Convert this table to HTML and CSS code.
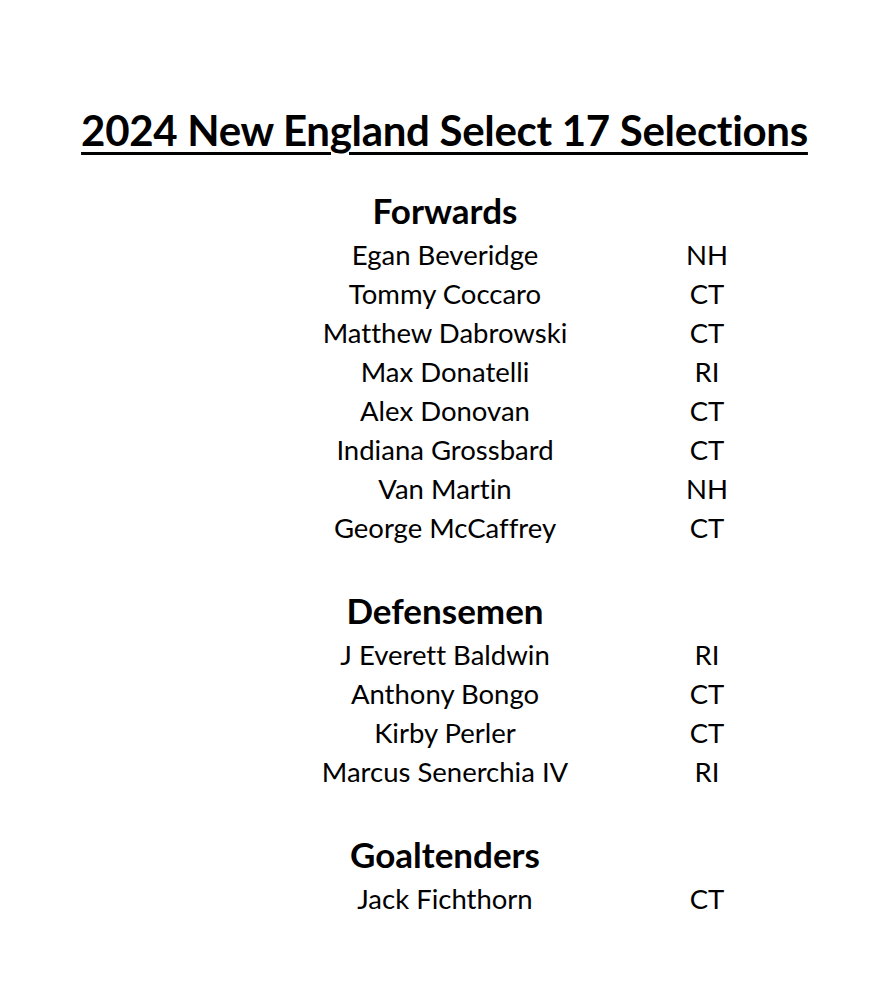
FILE: index.html
```html
<!DOCTYPE html>
<html>
<head>
<meta charset="utf-8">
<link rel="stylesheet" href="styles.css">
</head>
<body>
<main class="page">
  <h1 class="title">2024 New England Select 17 Selections</h1>
  <section class="roster">
    <h2 class="group">Forwards</h2>
    <div class="name">Egan Beveridge</div><div class="state">NH</div>
    <div class="name">Tommy Coccaro</div><div class="state">CT</div>
    <div class="name">Matthew Dabrowski</div><div class="state">CT</div>
    <div class="name">Max Donatelli</div><div class="state">RI</div>
    <div class="name">Alex Donovan</div><div class="state">CT</div>
    <div class="name">Indiana Grossbard</div><div class="state">CT</div>
    <div class="name">Van Martin</div><div class="state">NH</div>
    <div class="name">George McCaffrey</div><div class="state">CT</div>
    <h2 class="group spaced">Defensemen</h2>
    <div class="name">J Everett Baldwin</div><div class="state">RI</div>
    <div class="name">Anthony Bongo</div><div class="state">CT</div>
    <div class="name">Kirby Perler</div><div class="state">CT</div>
    <div class="name">Marcus Senerchia IV</div><div class="state">RI</div>
    <h2 class="group spaced">Goaltenders</h2>
    <div class="name">Jack Fichthorn</div><div class="state">CT</div>
  </section>
</main>
</body>
</html>
```
FILE: styles.css
```css
html, body {
  margin: 0;
  padding: 0;
  background: #ffffff;
}
.page {
  width: 889px;
  height: 1005px;
  font-family: "Lato", "Liberation Sans", sans-serif;
  font-variant-ligatures: none;
  color: #000;
  padding-top: 104px;
  box-sizing: border-box;
}
.title {
  margin: 0;
  text-align: center;
  font-size: 42px;
  font-weight: 700;
  letter-spacing: -0.3px;
  line-height: 52px;
  text-decoration: underline;
  text-decoration-thickness: 3px;
  text-underline-offset: 6px;
}
.roster {
  display: grid;
  grid-template-columns: 300px 224px;
  margin-left: 295px;
  margin-top: 31px;
}
.group {
  grid-column: 1 / -1;
  width: 300px;
  margin: 0;
  padding-bottom: 2px;
  text-align: center;
  font-size: 35px;
  font-weight: 700;
  line-height: 46px;
}
.group.spaced {
  margin-top: 40px;
}
.name, .state {
  font-size: 27.5px;
  line-height: 39px;
  text-align: center;
  white-space: nowrap;
}
```
